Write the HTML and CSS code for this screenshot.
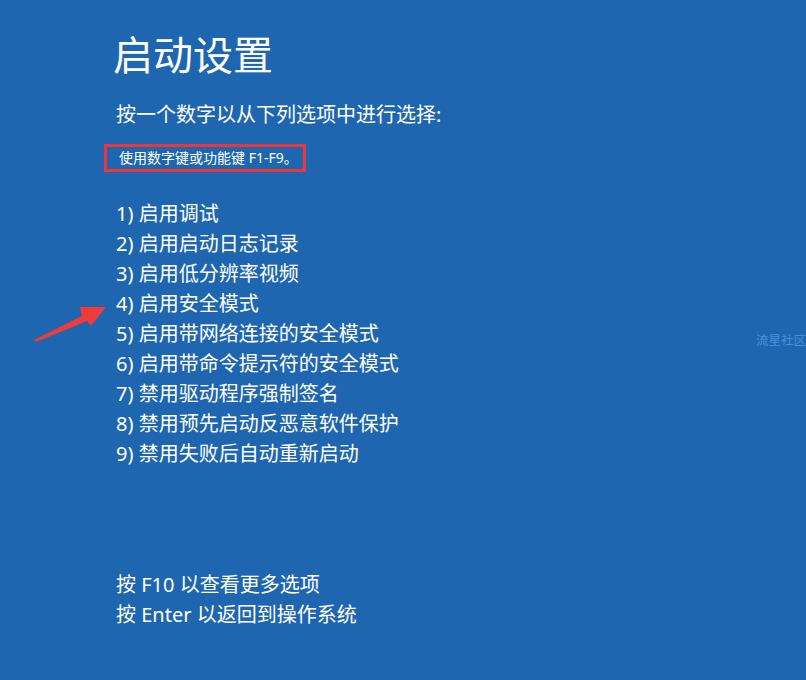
FILE: index.html
```html
<!DOCTYPE html>
<html lang="zh-CN">
<head>
<meta charset="utf-8">
<link rel="stylesheet" href="styles.css">
</head>
<body>
<div class="screen">
  <h1 class="title">启动设置</h1>
  <p class="prompt">按一个数字以从下列选项中进行选择:</p>
  <div class="hint">使用数字键或功能键 F1-F9。</div>
  <ol class="options">
    <li>1) 启用调试</li>
    <li>2) 启用启动日志记录</li>
    <li>3) 启用低分辨率视频</li>
    <li>4) 启用安全模式</li>
    <li>5) 启用带网络连接的安全模式</li>
    <li>6) 启用带命令提示符的安全模式</li>
    <li>7) 禁用驱动程序强制签名</li>
    <li>8) 禁用预先启动反恶意软件保护</li>
    <li>9) 禁用失败后自动重新启动</li>
  </ol>
  <div class="footer">
    <p>按 F10 以查看更多选项</p>
    <p>按 Enter 以返回到操作系统</p>
  </div>
  <svg class="arrow" width="80" height="45" viewBox="0 0 80 45">
    <polygon points="4,40 52,16 50,7 76,7 61,26 57,21 6,42" fill="#f23a3a"/>
  </svg>
  <div class="watermark">流星社区</div>
</div>
</body>
</html>
```

FILE: styles.css
```css
html, body {
  margin: 0;
  padding: 0;
  background: #1f66b1;
}
.screen {
  position: relative;
  width: 806px;
  height: 680px;
  overflow: hidden;
  box-sizing: border-box;
  padding: 35px 0 0 116px;
  color: #ffffff;
  font-family: "Segoe UI", "Noto Sans", "Noto Sans CJK SC", sans-serif;
}
.title {
  margin: 0 0 0 -3px;
  font-size: 40px;
  line-height: 40px;
  font-weight: 400;
}
.prompt {
  margin: 25px 0 0;
  font-size: 20px;
  line-height: 30px;
}
.hint {
  display: inline-block;
  margin: 14px 0 0 -12px;
  padding: 1px 5px 1px 12px;
  border: 3px solid #ee3636;
  font-size: 14px;
  line-height: 20px;
}
.options {
  list-style: none;
  margin: 27px 0 0;
  padding: 0;
  font-size: 20px;
  line-height: 30px;
}
.footer {
  margin-top: 101px;
  font-size: 20px;
  line-height: 30px;
}
.footer p {
  margin: 0;
}
.arrow {
  position: absolute;
  left: 30px;
  top: 300px;
}
.watermark {
  position: absolute;
  left: 756px;
  top: 332px;
  font-size: 12.5px;
  line-height: 16px;
  color: #4a8fdb;
  white-space: nowrap;
  font-family: "Noto Sans CJK SC", sans-serif;
}
```
